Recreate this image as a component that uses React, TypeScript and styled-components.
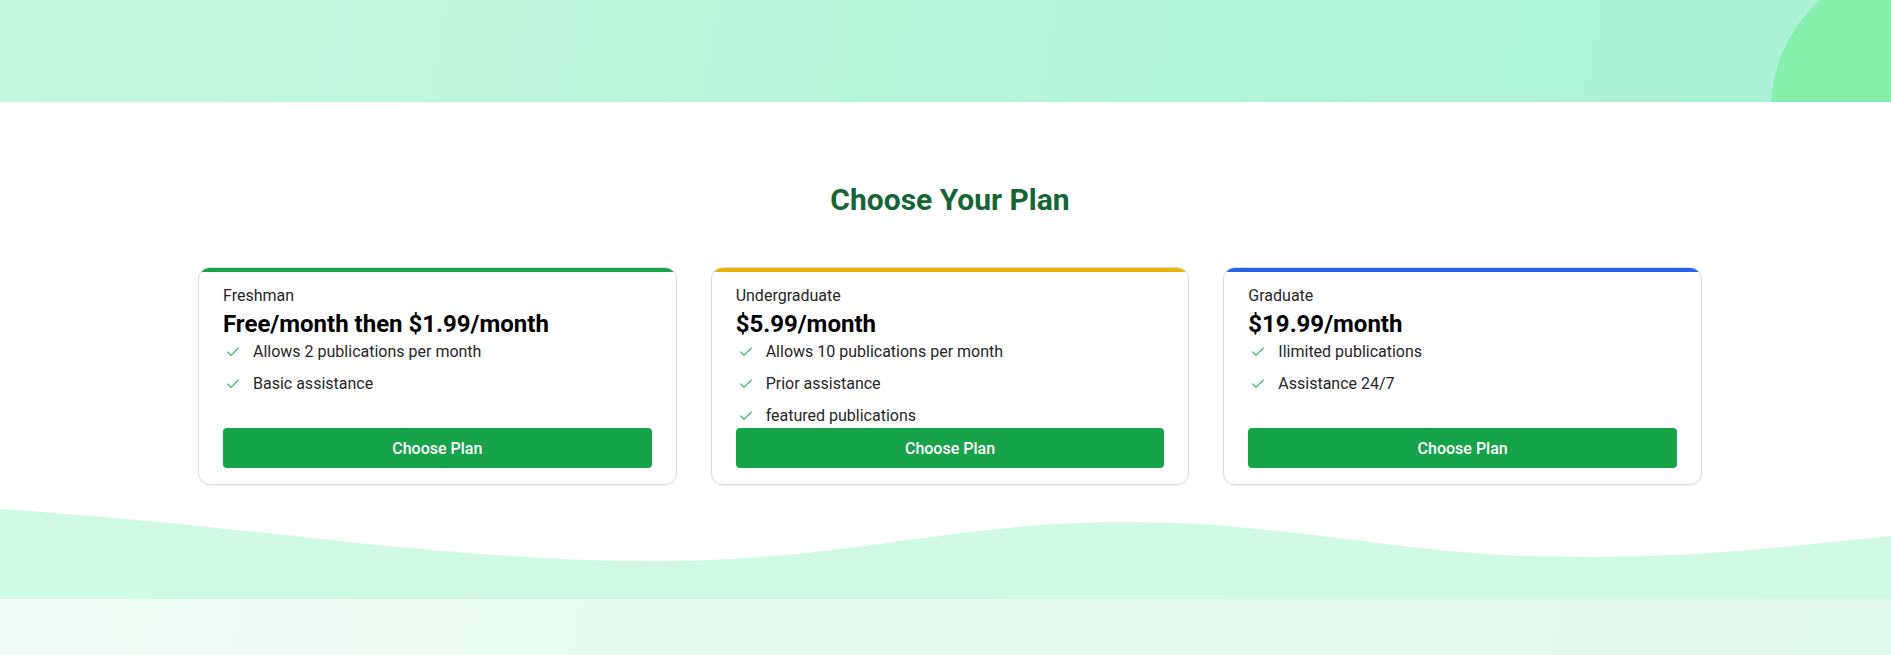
import React from 'react'
import styled, { createGlobalStyle } from 'styled-components'
import { Check } from 'lucide-react'

const GlobalStyle = createGlobalStyle`
  * { box-sizing: border-box; }
  body {
    margin: 0;
    font-family: Roboto, 'Liberation Sans', Arial, sans-serif;
    background: #fff;
    overflow: hidden;
  }
`

const plans = [
  {
    id: 1,
    name: 'Freshman',
    price: 'Free/month then $1.99/month',
    accent: '#16a34a',
    features: ['Allows 2 publications per month', 'Basic assistance'],
  },
  {
    id: 2,
    name: 'Undergraduate',
    price: '$5.99/month',
    accent: '#eab308',
    features: ['Allows 10 publications per month', 'Prior assistance', 'featured publications'],
  },
  {
    id: 3,
    name: 'Graduate',
    price: '$19.99/month',
    accent: '#2563eb',
    features: ['Ilimited publications', 'Assistance 24/7'],
  },
]

function App() {
  return (
    <Page>
      <GlobalStyle />
      <Header>
        <Blob />
      </Header>

      <Section>
        <Title>Choose Your Plan</Title>
        <Grid>
          {plans.map((plan) => (
            <Card key={plan.id}>
              <Stripe $color={plan.accent} />
              <Body>
                <Name>{plan.name}</Name>
                <Price>{plan.price}</Price>
                <Features>
                  {plan.features.map((f) => (
                    <Feature key={f}>
                      <Check size={16} color='#22c55e' strokeWidth={1.75} />
                      <span>{f}</span>
                    </Feature>
                  ))}
                </Features>
                <Button>Choose Plan</Button>
              </Body>
            </Card>
          ))}
        </Grid>
      </Section>

      <Wave viewBox='0 0 1891 90' preserveAspectRatio='none'>
        <path
          fill='#d1fae5'
          d='M0,0 C250,16 440,52 651,52 C850,52 950,13 1125,13 C1300,13 1400,48 1580,48 C1710,48 1800,36 1891,27 L1891,90 L0,90 Z'
        />
      </Wave>
      <Footer />
    </Page>
  )
}

export default App

const Page = styled.div`
  width: 100%;
  min-height: 655px;
  display: flex;
  flex-direction: column;
`

const Header = styled.div`
  position: relative;
  height: 102px;
  overflow: hidden;
  background: linear-gradient(100deg, #c6f7df 0%, #b6f5d9 50%, #a8f2d5 100%);
`

const Blob = styled.div`
  position: absolute;
  width: 296px;
  height: 296px;
  border-radius: 50%;
  top: -38px;
  right: -176px;
  background: #86efac;
`

const Section = styled.section`
  padding: 80px 189px 0 198px;
  display: flex;
  flex-direction: column;
  align-items: center;
`

const Title = styled.h2`
  margin: 0 0 49px;
  font-size: 30px;
  line-height: 36px;
  font-weight: 700;
  color: #166534;
`

const Grid = styled.div`
  width: 100%;
  display: grid;
  grid-template-columns: repeat(3, 1fr);
  gap: 34px;
`

const Card = styled.div`
  display: flex;
  flex-direction: column;
  background: #fff;
  border: 1px solid #dcdce1;
  border-radius: 12px;
  overflow: hidden;
  box-shadow: 0 1px 2px rgba(0, 0, 0, 0.05);
`

const Stripe = styled.div<{ $color: string }>`
  height: 4px;
  background: ${(p) => p.$color};
`

const Body = styled.div`
  flex: 1;
  display: flex;
  flex-direction: column;
  padding: 12px 24px 16px;
`

const Name = styled.p`
  margin: 0;
  font-size: 16px;
  line-height: 24px;
  color: #262626;
`

const Price = styled.h3`
  margin: 0;
  font-size: 24px;
  line-height: 32px;
  font-weight: 700;
  color: #000;
`

const Features = styled.ul`
  list-style: none;
  margin: 0;
  padding: 0;
  display: flex;
  flex-direction: column;
  gap: 8px;
`

const Feature = styled.li`
  display: flex;
  align-items: center;
  gap: 12px;
  padding-left: 2px;
  font-size: 16px;
  line-height: 24px;
  color: #262626;
`

const Button = styled.button`
  margin-top: auto;
  height: 40px;
  width: 100%;
  border: none;
  border-radius: 4px;
  background: #16a34a;
  color: #fff;
  font-family: inherit;
  font-size: 16px;
  font-weight: 500;
  cursor: pointer;
`

const Wave = styled.svg`
  display: block;
  width: 100%;
  height: 90px;
  margin-top: 24px;
`

const Footer = styled.div`
  height: 57px;
  background: linear-gradient(100deg, #effcf5 0%, #e6faef 50%, #dff8ec 100%);
`
